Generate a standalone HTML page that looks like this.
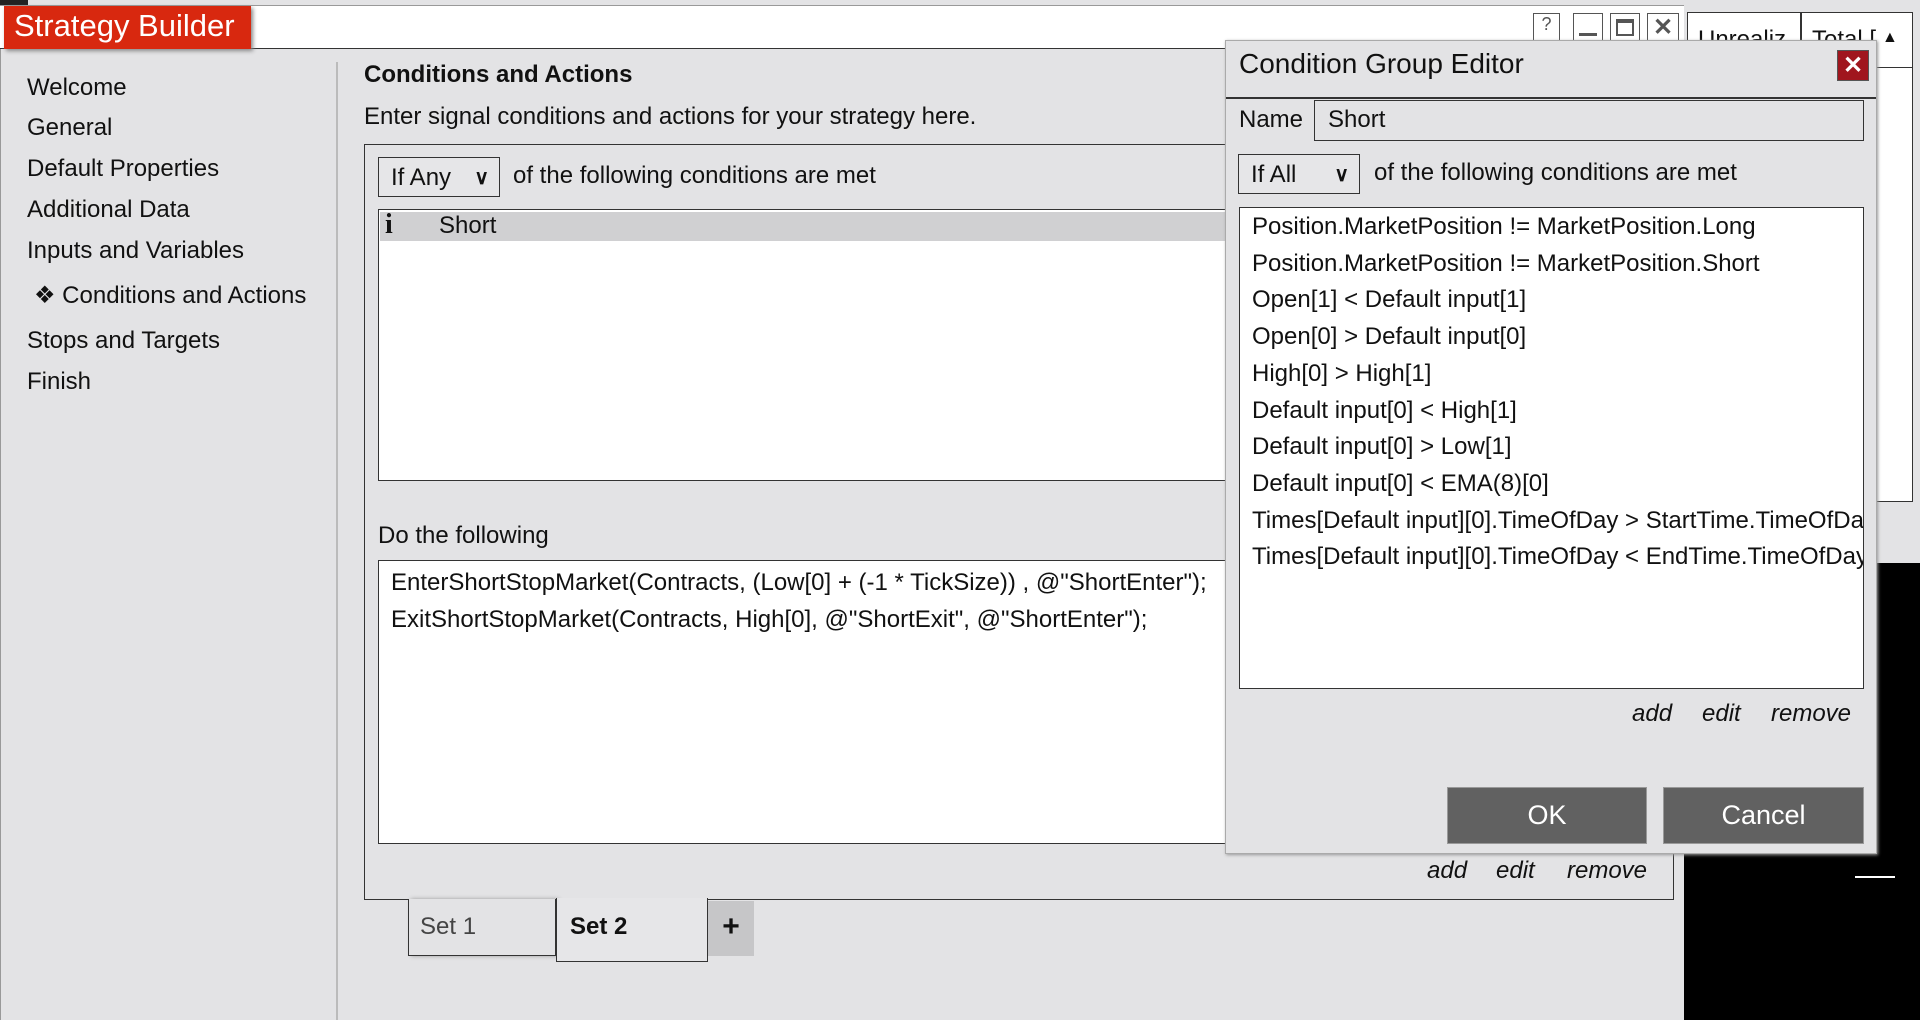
<!DOCTYPE html>
<html><head><meta charset="utf-8"><style>
*{box-sizing:border-box;margin:0;padding:0}
body{width:1920px;height:1020px;overflow:hidden;background:#000;font-family:"Liberation Sans",sans-serif;color:#111;position:relative}
.a{position:absolute}
.t{position:absolute;font-size:24px;white-space:nowrap;line-height:1}
.box{position:absolute;border:1.5px solid #333;background:#fff}
.dd{position:absolute;border:1.5px solid #333;background:#e6e6e8;font-size:24px;padding-left:12px;line-height:1}
.dd span{position:absolute;right:10px;font-weight:bold;font-size:20px;top:10px}
.it{font-style:italic}
</style></head><body>
<div class="a" style="left:0;top:0;width:1920px;height:6px;background:#e3e3e5"></div>
<div class="a" style="left:0;top:0;width:28px;height:6px;background:#222"></div>
<!-- right background grid -->
<div class="a" style="left:1684px;top:0;width:236px;height:563px;background:#e3e3e5"></div>
<div class="a" style="left:1687px;top:12px;width:226px;height:490px;background:#fff;border:1.5px solid #333"></div>
<div class="a" style="left:1687px;top:12px;width:226px;height:56px;border-bottom:1.5px solid #333"></div>
<div class="t" style="left:1698px;top:28px;">Unrealiz</div>
<div class="a" style="left:1800px;top:12px;width:1.5px;height:56px;background:#333"></div>
<div class="t" style="left:1812px;top:28px;">Total [</div>
<div class="t" style="left:1882px;top:30px;font-size:16px">▲</div>
<div class="a" style="left:1855px;top:876px;width:40px;height:1.5px;background:#fff"></div>

<!-- main window -->
<div class="a" style="left:0;top:5px;width:1684px;height:1015px;background:#e3e3e5;border-left:1px solid #999"></div>
<div class="a" style="left:0;top:5px;width:1684px;height:44px;background:#fff;border-bottom:1.5px solid #333;border-top:1px solid #999"></div>
<div class="a" style="left:4px;top:6px;width:247px;height:43px;background:#d8280f;box-shadow:2px 2px 4px #888"></div>
<div class="t" style="left:14px;top:10px;font-size:31px;color:#fff">Strategy Builder</div>
<!-- window buttons -->
<div class="a" style="left:1533px;top:13px;width:27px;height:30px;border:1.5px solid #555;background:#fff;font-size:18px;text-align:center;color:#555">?</div>
<div class="a" style="left:1573px;top:13px;width:30px;height:30px;border:1.5px solid #555;background:#fff"><div class="a" style="left:5px;top:19px;width:18px;height:3px;background:#555"></div></div>
<div class="a" style="left:1610px;top:13px;width:30px;height:30px;border:1.5px solid #555;background:#fff"><div class="a" style="left:5px;top:5px;width:18px;height:17px;border:2px solid #555;border-top-width:4px"></div></div>
<div class="a" style="left:1647px;top:13px;width:32px;height:30px;border:1.5px solid #555;background:#fff;font-size:24px;font-weight:bold;text-align:center;color:#555;line-height:27px">✕</div>

<!-- sidebar -->
<div class="a" style="left:6px;top:60px;width:326px;height:960px;background:#e3e3e5"></div>
<div class="a" style="left:336px;top:62px;width:2px;height:958px;background:#bbb"></div>
<div class="t" style="left:27px;top:76px">Welcome</div>
<div class="t" style="left:27px;top:116px">General</div>
<div class="t" style="left:27px;top:157px">Default Properties</div>
<div class="t" style="left:27px;top:198px">Additional Data</div>
<div class="t" style="left:27px;top:239px">Inputs and Variables</div>
<div class="t" style="left:34px;top:284px">❖ Conditions and Actions</div>
<div class="t" style="left:27px;top:329px">Stops and Targets</div>
<div class="t" style="left:27px;top:370px">Finish</div>

<!-- content -->
<div class="t" style="left:364px;top:63px;font-weight:bold">Conditions and Actions</div>
<div class="t" style="left:364px;top:105px">Enter signal conditions and actions for your strategy here.</div>
<div class="a" style="left:364px;top:144px;width:1310px;height:756px;border:1.5px solid #333"></div>
<div class="dd" style="left:378px;top:157px;width:122px;height:40px;padding-top:8px">If Any<span>∨</span></div>
<div class="t" style="left:513px;top:164px">of the following conditions are met</div>
<div class="box" style="left:378px;top:209px;width:1281px;height:272px"></div>
<div class="a" style="left:380px;top:212px;width:1277px;height:29px;background:#d0d0d2"></div>
<div class="t" style="left:385px;top:211px;font-family:'Liberation Serif',serif;font-weight:bold;font-size:28px">i</div>
<div class="t" style="left:439px;top:214px">Short</div>
<div class="t" style="left:378px;top:524px">Do the following</div>
<div class="box" style="left:378px;top:560px;width:1281px;height:284px"></div>
<div class="t" style="left:391px;top:571px">EnterShortStopMarket(Contracts, (Low[0] + (-1 * TickSize)) , @"ShortEnter");</div>
<div class="t" style="left:391px;top:608px">ExitShortStopMarket(Contracts, High[0], @"ShortExit", @"ShortEnter");</div>
<div class="t it" style="left:1427px;top:859px">add</div>
<div class="t it" style="left:1496px;top:859px">edit</div>
<div class="t it" style="left:1567px;top:859px">remove</div>
<!-- tabs -->
<div class="a" style="left:408px;top:899px;width:148px;height:57px;border:1.5px solid #333;border-top:none;background:#e3e3e5;box-shadow:3px 0 4px #999"></div>
<div class="t" style="left:420px;top:915px;color:#444">Set 1</div>
<div class="a" style="left:556px;top:898px;width:152px;height:64px;border:1.5px solid #333;border-top:none;background:#e6e6e8"></div>
<div class="a" style="left:558px;top:898px;width:148px;height:4px;background:#e6e6e8"></div>
<div class="t" style="left:570px;top:915px;font-weight:bold">Set 2</div>
<div class="a" style="left:708px;top:901px;width:46px;height:55px;background:#c6c6c8;font-size:30px;font-weight:bold;text-align:center;line-height:52px">+</div>

<!-- dialog -->
<div class="a" style="left:1225px;top:40px;width:652px;height:814px;background:#e3e3e5;border:1.5px solid #aaa;box-shadow:1px 1px 3px #999"></div>
<div class="a" style="left:1226px;top:97px;width:650px;height:1.5px;background:#333"></div>
<div class="t" style="left:1239px;top:50px;font-size:28px">Condition Group Editor</div>
<div class="a" style="left:1837px;top:50px;width:32px;height:31px;background:#a0161e;border:1px solid #555;color:#fff;font-weight:bold;font-size:24px;text-align:center;line-height:30px">✕</div>
<div class="t" style="left:1239px;top:108px">Name</div>
<div class="a" style="left:1314px;top:100px;width:550px;height:41px;border:1.5px solid #333;background:#e3e3e5"></div>
<div class="t" style="left:1328px;top:108px">Short</div>
<div class="dd" style="left:1238px;top:154px;width:122px;height:40px;padding-top:8px">If All<span>∨</span></div>
<div class="t" style="left:1374px;top:161px">of the following conditions are met</div>
<div class="box" style="left:1239px;top:207px;width:625px;height:482px;overflow:hidden">
<div style="position:absolute;left:12px;top:1px;font-size:24px;line-height:36.7px;white-space:nowrap">
Position.MarketPosition != MarketPosition.Long<br>Position.MarketPosition != MarketPosition.Short<br>Open[1] &lt; Default input[1]<br>Open[0] &gt; Default input[0]<br>High[0] &gt; High[1]<br>Default input[0] &lt; High[1]<br>Default input[0] &gt; Low[1]<br>Default input[0] &lt; EMA(8)[0]<br>Times[Default input][0].TimeOfDay &gt; StartTime.TimeOfDay<br>Times[Default input][0].TimeOfDay &lt; EndTime.TimeOfDay</div></div>
<div class="t it" style="left:1632px;top:702px">add</div>
<div class="t it" style="left:1702px;top:702px">edit</div>
<div class="t it" style="left:1771px;top:702px">remove</div>
<div class="a" style="left:1447px;top:787px;width:200px;height:57px;background:#616161;border:1px solid #999;color:#fff;font-size:27px;text-align:center;line-height:55px">OK</div>
<div class="a" style="left:1663px;top:787px;width:201px;height:57px;background:#616161;border:1px solid #999;color:#fff;font-size:27px;text-align:center;line-height:55px">Cancel</div>
</body></html>
